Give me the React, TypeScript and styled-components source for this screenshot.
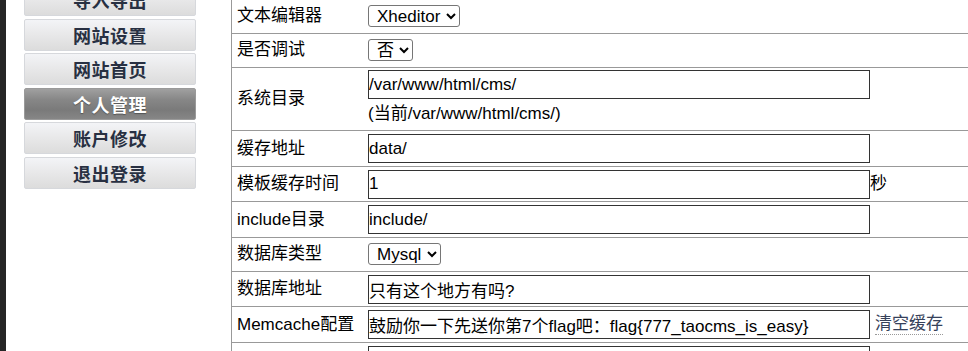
import React from 'react'
import styled, { createGlobalStyle } from 'styled-components'

const GlobalStyle = createGlobalStyle`
    html, body {
        margin: 0;
        padding: 0;
        background: #fff;
        overflow: hidden;
    }
    body {
        font-family: "Liberation Sans", "Noto Sans CJK SC", sans-serif;
        font-size: 17px;
        line-height: 20px;
        color: #000;
    }
`

// the page is scrolled a little, so the first row and button are cut at the top
const Page = styled.div`
    display: flex;
    align-items: flex-start;
    margin-top: -17px;
    min-height: calc(100vh + 17px);
`

const DarkStrip = styled.div`
    width: 6px;
    flex-shrink: 0;
    align-self: stretch;
    background: #262626;
`

const Sidebar = styled.nav`
    width: 225px;
    flex-shrink: 0;
    box-sizing: border-box;
    padding: 1px 0 0 18px;
    display: flex;
    flex-direction: column;
    gap: 2.6px;
`

const MenuButton = styled.a<{ $active?: boolean }>`
    display: flex;
    align-items: center;
    justify-content: center;
    width: 172px;
    height: 32px;
    box-sizing: border-box;
    border: 1px solid ${(p) => (p.$active ? '#9a9a9a' : '#d6d8dc')};
    border-radius: 2px;
    background: ${(p) =>
        p.$active
            ? 'linear-gradient(#a0a0a0 0%, #878787 35%, #7a7a7a 70%, #868686 100%)'
            : 'linear-gradient(#f3f4f7 0%, #e9e9ea 45%, #dcdcdc 100%)'};
    color: ${(p) => (p.$active ? '#fff' : '#283042')};
    font-family: "Noto Sans CJK SC", sans-serif;
    font-size: 18px;
    font-weight: 700;
    letter-spacing: 0.5px;
    text-decoration: none;
    text-shadow: ${(p) => (p.$active ? '0 1px 1px #555' : 'none')};
`

const Table = styled.div`
    flex: 1;
    min-width: 0;
    margin-top: 17px;
    border-left: 1px solid #999;
`

const Row = styled.div<{ $pad?: string }>`
    display: grid;
    grid-template-columns: 136px 1fr;
    align-items: center;
    border-bottom: 1px solid #999;
    padding: ${(p) => p.$pad || '3px 0 2.5px'};
`

const Label = styled.div`
    padding-left: 5px;
    white-space: nowrap;
    line-height: 20px;
`

const Value = styled.div`
    display: flex;
    align-items: center;
    white-space: nowrap;
`

const Stack = styled.div`
    display: flex;
    flex-direction: column;
`

const TextInput = styled.input`
    width: 502px;
    height: 29px;
    flex-shrink: 0;
    box-sizing: border-box;
    border: 1px solid #333;
    padding: 0;
    margin: 0;
    font-family: "Liberation Sans", "Noto Sans CJK SC", sans-serif;
    font-size: 17px;
    color: #000;
    background: #fff;
    outline: none;
`

const Select = styled.select`
    height: 22px;
    box-sizing: border-box;
    border: 1px solid #767676;
    border-radius: 3px;
    margin: 0;
    padding: 0 2px 0 4px;
    font-family: "Liberation Sans", "Noto Sans CJK SC", sans-serif;
    font-size: 17px;
    color: #000;
    background: #fff;
`

const Note = styled.div`
    line-height: 29px;
`

const Unit = styled.span`
    line-height: 20px;
`

const ClearLink = styled.a`
    margin-left: 5px;
    color: #36415a;
    text-decoration: none;
    border-bottom: 1px dotted #999;
    line-height: 20px;
`

const menu = ['导入导出', '网站设置', '网站首页', '个人管理', '账户修改', '退出登录']

export default function App() {
    return (
        <>
            <GlobalStyle />
            <Page>
                <DarkStrip />
                <Sidebar>
                    {menu.map((m) => (
                        <MenuButton key={m} href="#" $active={m === '个人管理'}>
                            {m}
                        </MenuButton>
                    ))}
                </Sidebar>
                <Table>
                    <Row $pad="5px 0 6px">
                        <Label>文本编辑器</Label>
                        <Value>
                            <Select defaultValue="xheditor">
                                <option value="xheditor">Xheditor</option>
                            </Select>
                        </Value>
                    </Row>
                    <Row $pad="5px 0 6px">
                        <Label>是否调试</Label>
                        <Value>
                            <Select defaultValue="0">
                                <option value="0">否</option>
                                <option value="1">是</option>
                            </Select>
                        </Value>
                    </Row>
                    <Row $pad="2px 0">
                        <Label>系统目录</Label>
                        <Stack>
                            <TextInput defaultValue="/var/www/html/cms/" />
                            <Note>(当前/var/www/html/cms/)</Note>
                        </Stack>
                    </Row>
                    <Row>
                        <Label>缓存地址</Label>
                        <Value>
                            <TextInput defaultValue="data/" />
                        </Value>
                    </Row>
                    <Row>
                        <Label>模板缓存时间</Label>
                        <Value>
                            <TextInput defaultValue="1" />
                            <Unit>秒</Unit>
                        </Value>
                    </Row>
                    <Row>
                        <Label>include目录</Label>
                        <Value>
                            <TextInput defaultValue="include/" />
                        </Value>
                    </Row>
                    <Row $pad="5px 0 6px">
                        <Label>数据库类型</Label>
                        <Value>
                            <Select defaultValue="mysql">
                                <option value="mysql">Mysql</option>
                            </Select>
                        </Value>
                    </Row>
                    <Row>
                        <Label>数据库地址</Label>
                        <Value>
                            <TextInput defaultValue="只有这个地方有吗?" />
                        </Value>
                    </Row>
                    <Row>
                        <Label>Memcache配置</Label>
                        <Value>
                            <TextInput defaultValue="鼓励你一下先送你第7个flag吧：flag{777_taocms_is_easy}" />
                            <ClearLink href="#">清空缓存</ClearLink>
                        </Value>
                    </Row>
                    <Row>
                        <Label />
                        <Value>
                            <TextInput defaultValue="" />
                        </Value>
                    </Row>
                </Table>
            </Page>
        </>
    )
}
